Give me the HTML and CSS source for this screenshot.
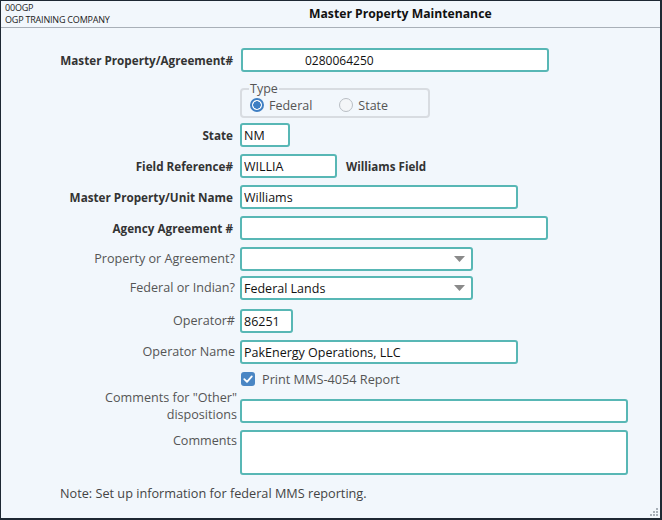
FILE: index.html
```html
<!DOCTYPE html>
<html>
<head>
<meta charset="utf-8">
<link rel="stylesheet" href="styles.css">
</head>
<body>
<div class="window">
  <header class="titlebar">
    <div class="company">
      <div>00OGP</div>
      <div>OGP TRAINING COMPANY</div>
    </div>
    <h1 class="title">Master Property Maintenance</h1>
  </header>

  <form class="form">
    <div class="row r-agreement">
      <label class="lbl strong">Master Property/Agreement#</label>
      <input class="inp w-308 num" value="0280064250">
    </div>

    <div class="row r-type">
      <span></span>
      <fieldset class="group">
        <legend>Type</legend>
        <div class="radios">
          <span class="radio on"><span class="dot"></span>Federal</span>
          <span class="radio"><span class="dot"></span>State</span>
        </div>
      </fieldset>
    </div>

    <div class="row r-state">
      <label class="lbl strong">State</label>
      <input class="inp w-50" value="NM">
    </div>

    <div class="row r-std">
      <label class="lbl strong">Field Reference#</label>
      <div class="inline">
        <input class="inp w-97" value="WILLIA">
        <span class="desc">Williams Field</span>
      </div>
    </div>

    <div class="row r-std">
      <label class="lbl strong">Master Property/Unit Name</label>
      <input class="inp w-278" value="Williams">
    </div>

    <div class="row r-std">
      <label class="lbl strong">Agency Agreement #</label>
      <input class="inp w-308" value="">
    </div>

    <div class="row r-std">
      <label class="lbl">Property or Agreement?</label>
      <div class="sel w-233">
        <span class="sel-val"></span>
        <svg class="arrow" width="11" height="6" viewBox="0 0 11 6"><path d="M0 0H11L5.5 6Z" fill="#8a8a8a"/></svg>
      </div>
    </div>

    <div class="row r-sel2">
      <label class="lbl">Federal or Indian?</label>
      <div class="sel w-233">
        <span class="sel-val">Federal Lands</span>
        <svg class="arrow" width="11" height="6" viewBox="0 0 11 6"><path d="M0 0H11L5.5 6Z" fill="#8a8a8a"/></svg>
      </div>
    </div>

    <div class="row r-op">
      <label class="lbl">Operator#</label>
      <input class="inp w-53" value="86251">
    </div>

    <div class="row r-std">
      <label class="lbl">Operator Name</label>
      <input class="inp w-278" value="PakEnergy Operations, LLC">
    </div>

    <div class="row r-check">
      <span></span>
      <span class="check">
        <svg class="box" width="14" height="14" viewBox="0 0 14 14"><rect x="0" y="0" width="14" height="14" rx="3" fill="#4a86c4"/><path d="M3.3 7.2L6 9.8L10.8 4.4" fill="none" stroke="#fff" stroke-width="1.8" stroke-linecap="round" stroke-linejoin="round"/></svg>
        Print MMS-4054 Report
      </span>
    </div>

    <div class="row r-other">
      <label class="lbl two">Comments for "Other"<br>dispositions</label>
      <input class="inp w-388" value="">
    </div>

    <div class="row r-comments">
      <label class="lbl top">Comments</label>
      <textarea class="inp w-388 area"></textarea>
    </div>
  </form>

  <p class="note">Note: Set up information for federal MMS reporting.</p>

  <svg class="grip" width="8" height="8" viewBox="0 0 8 8"><g fill="#a8b0b8"><rect x="6" y="0" width="2" height="2"/><rect x="3" y="3" width="2" height="2"/><rect x="6" y="3" width="2" height="2"/><rect x="0" y="6" width="2" height="2"/><rect x="3" y="6" width="2" height="2"/><rect x="6" y="6" width="2" height="2"/></g></svg>
</div>
</body>
</html>
```

FILE: styles.css
```css
* { box-sizing: border-box; }

html, body {
  margin: 0;
  padding: 0;
  background: #f2f7fc;
}

body {
  font-family: "Open Sans", "Noto Sans", sans-serif;
  color: #333;
}

.window {
  position: relative;
  width: 662px;
  height: 520px;
  background: #f2f7fc;
  border-top: 1px solid #1e2833;
  border-left: 1px solid #1e2833;
  border-right: 2px solid #1e2833;
  border-bottom: 2px solid #1e2833;
  overflow: hidden;
}

.titlebar {
  display: flex;
  align-items: center;
  height: 27px;
  border-bottom: 1px solid #a9b0b8;
  padding-left: 4px;
}

.company {
  width: 304px;
  font-size: 9px;
  line-height: 12px;
  color: #222;
  letter-spacing: -0.2px;
  margin-top: -1px;
}

.title {
  margin: 0;
  font-size: 12.2px;
  font-weight: 700;
  color: #111;
  line-height: 18px;
  margin-top: -1px;
}

.form {
  display: flex;
  flex-direction: column;
  padding-top: 20px;
  font-size: 12.5px;
}

.row {
  display: grid;
  grid-template-columns: 233px auto;
  grid-template-rows: 24px;
  column-gap: 6px;
  align-items: center;
  justify-items: start;
}

.r-agreement .inp { margin-left: 1px; }
.r-type { margin-top: 10px; grid-template-rows: 36px; }
.r-state { margin-top: 5px; }
.r-std { margin-top: 7px; }
.r-sel2 { margin-top: 5px; }
.r-op { margin-top: 9px; }
.r-check { margin-top: 8px; grid-template-rows: 14px; }
.r-other { margin-top: 13px; }
.r-comments { margin-top: 7px; grid-template-rows: 45px; align-items: start; }

.lbl {
  justify-self: end;
  text-align: right;
  color: #555;
  font-size: 12.6px;
  line-height: 16px;
  white-space: nowrap;
  margin-right: -1px;
}
.lbl.strong {
  font-weight: 700;
  font-size: 11.7px;
  color: #333;
  margin-right: 1px;
}
.lbl.two {
  align-self: start;
  line-height: 17px;
  margin-right: -3px;
  margin-top: -10px;
}
.lbl.top {
  margin-top: 3px;
  margin-right: -3px;
}

.inp {
  display: block;
  height: 24px;
  margin: 0;
  padding: 0 2px;
  border: 2px solid #58b7b5;
  border-radius: 3px;
  background: #fff;
  font-family: inherit;
  font-size: 12.5px;
  color: #111;
  outline: none;
}
.num { padding-left: 62px; font-size: 12px; }
.area { height: 45px; resize: none; }

.w-50 { width: 50px; }
.w-53 { width: 53px; }
.w-97 { width: 97px; }
.w-233 { width: 233px; }
.w-278 { width: 278px; }
.w-308 { width: 308px; }
.w-388 { width: 388px; }

.inline {
  display: flex;
  align-items: center;
  gap: 9px;
}
.desc {
  font-weight: 700;
  font-size: 11.6px;
  color: #333;
}

.sel {
  position: relative;
  display: flex;
  align-items: center;
  height: 24px;
  border: 2px solid #58b7b5;
  border-radius: 3px;
  background: #fff;
  padding: 0 2px;
  color: #111;
}
.sel-val { flex: 1; }
.arrow { margin-right: 4px; }

.group {
  width: 190px;
  height: 36px;
  margin: 0;
  padding: 0 8px 2px 8px;
  border: 2px solid #d8dce1;
  border-radius: 4px;
}
.group legend {
  padding: 0 1px;
  margin-left: -1px;
  font-size: 12.5px;
  line-height: 14px;
  color: #555;
}
.radios {
  display: flex;
  height: 18px;
  align-items: center;
  gap: 27px;
  color: #555;
}
.radio {
  display: flex;
  align-items: center;
  gap: 5px;
}
.dot {
  width: 14px;
  height: 14px;
  border-radius: 50%;
  border: 1px solid #b9bec4;
  background: #f4f6f8;
}
.radio.on .dot {
  border: 2px solid #3f7fc3;
  background: radial-gradient(circle, #3f7fc3 0 3.5px, #fff 4px);
}

.check {
  display: flex;
  align-items: center;
  gap: 7px;
  height: 14px;
  color: #555;
  margin-left: 1px;
  font-size: 12.7px;
}

.note {
  margin: 10px 0 0 59px;
  font-size: 12.7px;
  line-height: 16px;
  color: #444;
}

.grip {
  position: absolute;
  right: 2px;
  bottom: 2px;
}
```
